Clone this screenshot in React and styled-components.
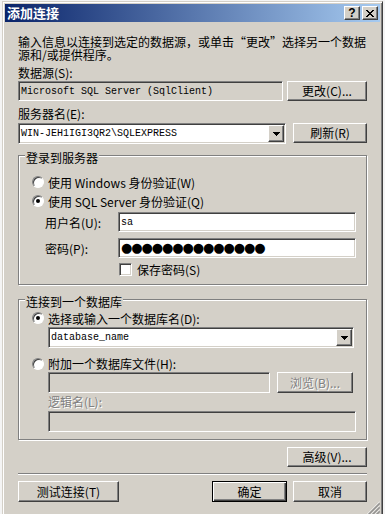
import React from 'react';
import styled, { createGlobalStyle } from 'styled-components';

// --- classic 3D palette ---
const FACE = '#d4d0c8';
const SHADOW = '#808080';
const DARK = '#404040';
const HILITE = '#ffffff';
const UI_FONT = '"Noto Sans CJK SC", "Noto Sans", sans-serif';
const MONO_FONT = '"Liberation Mono", "DejaVu Sans Mono", monospace';

const GlobalStyle = createGlobalStyle`
  html, body {
    margin: 0;
    padding: 0;
    background: #f4f4f4;
  }
  body {
    font-family: ${UI_FONT};
    font-size: 12px;
    color: #000;
    overflow: hidden;
  }
`;

const raised = `
  border: 1px solid;
  border-color: ${HILITE} ${DARK} ${DARK} ${HILITE};
  box-shadow: inset -1px -1px ${SHADOW}, inset 1px 1px ${FACE};
`;

const sunken = `
  border: 1px solid;
  border-color: ${SHADOW} ${HILITE} ${HILITE} ${SHADOW};
  box-shadow: inset 1px 1px ${DARK}, inset -1px -1px ${FACE};
`;

// --- window frame ---

const Page = styled.div`
  width: 385px;
  height: 514px;
  overflow: hidden;
  box-sizing: border-box;
  padding: 1px 0 0 2px;
`;

const Window = styled.div`
  width: 381px;
  height: 516px;
  box-sizing: border-box;
  display: flex;
  flex-direction: column;
  background: ${FACE};
  border: 1px solid;
  border-color: ${FACE} ${DARK} ${DARK} ${FACE};
  box-shadow: inset 1px 1px ${HILITE}, inset -1px -1px ${SHADOW};
  padding: 2px;
`;

const TitleBar = styled.div`
  height: 18px;
  flex-shrink: 0;
  display: flex;
  align-items: center;
  justify-content: space-between;
  padding: 0 2px;
  background: linear-gradient(to right, #0a246a, #a6caf0);
`;

const Title = styled.span`
  color: #fff;
  font-weight: bold;
  font-size: 13px;
  line-height: 18px;
`;

const CaptionButtons = styled.div`
  display: flex;
  gap: 2px;
`;

const CaptionButton = styled.span`
  width: 16px;
  height: 14px;
  box-sizing: border-box;
  ${raised}
  background: ${FACE};
  display: flex;
  align-items: center;
  justify-content: center;
  font: bold 12px "Liberation Sans", Arial, sans-serif;
  line-height: 12px;
`;

const Body = styled.div`
  flex: 1;
  position: relative;
  display: flex;
  flex-direction: column;
  padding: 13px 13px 0;
`;

// --- text ---

const Intro = styled.p`
  margin: 0;
  line-height: 13px;
  white-space: nowrap;
`;

const FieldLabel = styled.div`
  line-height: 14px;
  margin-top: ${p => p.$mt || 0}px;
  margin-left: ${p => p.$indent || 0}px;
  color: ${p => (p.$disabled ? SHADOW : '#000')};
  text-shadow: ${p => (p.$disabled ? `1px 1px ${HILITE}` : 'none')};
  white-space: nowrap;
`;

// --- controls ---

const Row = styled.div`
  display: flex;
  align-items: flex-start;
  gap: ${p => p.$gap || 0}px;
  margin-top: ${p => p.$mt || 0}px;
  margin-left: ${p => p.$indent || 0}px;
  justify-content: ${p => p.$justify || 'flex-start'};
`;

const TextBox = styled.div`
  width: ${p => p.$w}px;
  height: ${p => p.$h || 20}px;
  box-sizing: border-box;
  ${sunken}
  background: ${p => (p.$gray ? FACE : '#fff')};
  display: flex;
  align-items: center;
  padding: 0 0 0 2px;
  font-family: ${MONO_FONT};
  font-size: 10px;
  white-space: nowrap;
  overflow: hidden;
  flex-shrink: 0;
`;

const Combo = styled.div`
  width: ${p => p.$w}px;
  height: 21px;
  box-sizing: border-box;
  ${sunken}
  padding: 1px;
  background: #fff;
  display: flex;
  flex-shrink: 0;
`;

const ComboText = styled.span`
  flex: 1;
  display: flex;
  align-items: center;
  padding-left: 1px;
  font-family: ${MONO_FONT};
  font-size: 10px;
  white-space: nowrap;
`;

const ArrowButton = styled.span`
  width: 16px;
  box-sizing: border-box;
  ${raised}
  background: ${FACE};
  display: flex;
  align-items: center;
  justify-content: center;
`;

const Button = styled.button`
  width: ${p => p.$w}px;
  height: ${p => p.$h || 20}px;
  box-sizing: border-box;
  flex-shrink: 0;
  padding: 0;
  margin: 0;
  background: ${FACE};
  font-family: ${UI_FONT};
  font-size: 12px;
  line-height: 14px;
  color: ${p => (p.disabled ? SHADOW : '#000')};
  text-shadow: ${p => (p.disabled ? `1px 1px ${HILITE}` : 'none')};
  ${p =>
    p.$default
      ? `border: 1px solid #000;
         box-shadow: inset 1px 1px ${HILITE}, inset -1px -1px ${DARK}, inset -2px -2px ${SHADOW};`
      : raised}
`;

const Group = styled.div`
  position: relative;
  margin-top: ${p => p.$mt}px;
  padding: ${p => p.$pt}px 0 ${p => p.$pb}px 13px;
  border: 1px solid ${SHADOW};
  box-shadow: inset 1px 1px ${HILITE}, 1px 1px 0 ${HILITE};
  display: flex;
  flex-direction: column;
`;

const GroupCaption = styled.span`
  position: absolute;
  top: -5px;
  left: 6px;
  padding: 0 1px;
  line-height: 14px;
  background: ${FACE};
`;

const RadioOption = styled.div`
  height: ${p => p.$h || 18}px;
  margin-top: ${p => p.$mt || 0}px;
  display: flex;
  align-items: center;
  gap: 4px;
  white-space: nowrap;
`;

const RadioDot = styled.span`
  width: 12px;
  height: 12px;
  box-sizing: border-box;
  border-radius: 50%;
  border: 1px solid;
  border-color: ${SHADOW} ${HILITE} ${HILITE} ${SHADOW};
  background: #fff;
  box-shadow: inset 1px 1px ${DARK};
  position: relative;
  flex-shrink: 0;

  &::after {
    content: '';
    display: ${p => (p.$checked ? 'block' : 'none')};
    position: absolute;
    left: 3px;
    top: 3px;
    width: 4px;
    height: 4px;
    border-radius: 50%;
    background: #000;
  }
`;

const FieldRow = styled.div`
  display: flex;
  align-items: center;
  margin-top: ${p => p.$mt || 0}px;
  margin-left: 13px;
`;

const FieldName = styled.span`
  width: 73px;
  flex-shrink: 0;
  white-space: nowrap;
`;

const Dots = styled.span`
  font-family: "DejaVu Sans", sans-serif;
  font-size: 13px;
  letter-spacing: -1.1px;
  line-height: 14px;
`;

const CheckRow = styled.div`
  height: 14px;
  display: flex;
  align-items: center;
  gap: 5px;
  margin-top: ${p => p.$mt || 0}px;
  margin-left: 87px;
`;

const CheckBox = styled.span`
  width: 13px;
  height: 13px;
  box-sizing: border-box;
  ${sunken}
  background: #fff;
`;

const Separator = styled.div`
  height: 0;
  margin-top: ${p => p.$mt}px;
  border-top: 1px solid ${SHADOW};
  border-bottom: 1px solid ${HILITE};
`;

const ButtonPair = styled.div`
  display: flex;
  gap: 6px;
`;

const Gripper = styled.svg`
  position: absolute;
  right: 0;
  bottom: 0;
`;

const DownArrow = () => (
  <svg width="7" height="4" viewBox="0 0 7 4" shapeRendering="crispEdges">
    <path d="M0 0h7v1H0zM1 1h5v1H1zM2 2h3v1H2zM3 3h1v1H3z" fill="#000" />
  </svg>
);

const CloseGlyph = () => (
  <svg width="8" height="7" viewBox="0 0 8 7" shapeRendering="crispEdges">
    <path
      d="M0 0h2v1H0zM6 0h2v1H6zM1 1h2v1H1zM5 1h2v1H5zM2 2h4v1H2zM3 3h2v1H3zM2 4h4v1H2zM1 5h2v1H1zM5 5h2v1H5zM0 6h2v1H0zM6 6h2v1H6z"
      fill="#000"
    />
  </svg>
);

const SizeGrip = () => (
  <Gripper width="13" height="13" viewBox="0 0 13 13">
    {[0, 4, 8].map(o => (
      <g key={o}>
        <line x1={o + 0.5} y1="13" x2="13" y2={o + 0.5} stroke={HILITE} />
        <line x1={o + 1.5} y1="13" x2="13" y2={o + 1.5} stroke={SHADOW} />
        <line x1={o + 2.5} y1="13" x2="13" y2={o + 2.5} stroke={SHADOW} />
      </g>
    ))}
  </Gripper>
);

const App = () => {
  return (
    <>
      <GlobalStyle />
      <Page>
        <Window>
          <TitleBar>
            <Title>添加连接</Title>
            <CaptionButtons>
              <CaptionButton>?</CaptionButton>
              <CaptionButton><CloseGlyph /></CaptionButton>
            </CaptionButtons>
          </TitleBar>

          <Body>
            <Intro>
              输入信息以连接到选定的数据源，或单击“更改”选择另一个数据
              <br />
              源和/或提供程序。
            </Intro>

            <FieldLabel $mt={5}>数据源(S):</FieldLabel>
            <Row $mt={1} $gap={4}>
              <TextBox $w={265} $gray>Microsoft SQL Server (SqlClient)</TextBox>
              <Button $w={80}>更改(C)...</Button>
            </Row>

            <FieldLabel $mt={6}>服务器名(E):</FieldLabel>
            <Row $mt={2} $gap={7}>
              <Combo $w={268}>
                <ComboText>WIN-JEH1IGI3QR2\SQLEXPRESS</ComboText>
                <ArrowButton><DownArrow /></ArrowButton>
              </Combo>
              <Button $w={74}>刷新(R)</Button>
            </Row>

            <Group $mt={11} $pt={17} $pb={8}>
              <GroupCaption>登录到服务器</GroupCaption>
              <RadioOption>
                <RadioDot />
                使用 Windows 身份验证(W)
              </RadioOption>
              <RadioOption $mt={1}>
                <RadioDot $checked />
                使用 SQL Server 身份验证(Q)
              </RadioOption>
              <FieldRow $mt={2}>
                <FieldName>用户名(U):</FieldName>
                <TextBox $w={238}>sa</TextBox>
              </FieldRow>
              <FieldRow $mt={6}>
                <FieldName>密码(P):</FieldName>
                <TextBox $w={238}>
                  <Dots>●●●●●●●●●●●●●●</Dots>
                </TextBox>
              </FieldRow>
              <CheckRow $mt={4}>
                <CheckBox />
                保存密码(S)
              </CheckRow>
            </Group>

            <Group $mt={14} $pt={9} $pb={7}>
              <GroupCaption>连接到一个数据库</GroupCaption>
              <RadioOption>
                <RadioDot $checked />
                选择或输入一个数据库名(D):
              </RadioOption>
              <Row $indent={16}>
                <Combo $w={306}>
                  <ComboText>database_name</ComboText>
                  <ArrowButton><DownArrow /></ArrowButton>
                </Combo>
              </Row>
              <RadioOption $mt={7} $h={17}>
                <RadioDot />
                附加一个数据库文件(H):
              </RadioOption>
              <Row $indent={16} $gap={7}>
                <TextBox $w={222} $h={21} $gray />
                <Button $w={76} $h={21} disabled>浏览(B)...</Button>
              </Row>
              <FieldLabel $mt={2} $indent={16} $disabled>逻辑名(L):</FieldLabel>
              <Row $mt={2} $indent={16}>
                <TextBox $w={308} $h={21} $gray />
              </Row>
            </Group>

            <Row $mt={7} $justify="flex-end">
              <Button $w={80}>高级(V)...</Button>
            </Row>

            <Separator $mt={6} />

            <Row $mt={6} $justify="space-between">
              <Button $w={101} $h={21}>测试连接(T)</Button>
              <ButtonPair>
                <Button $w={75} $h={21} $default>确定</Button>
                <Button $w={74} $h={21}>取消</Button>
              </ButtonPair>
            </Row>

            <SizeGrip />
          </Body>
        </Window>
      </Page>
    </>
  );
};

export default App;
